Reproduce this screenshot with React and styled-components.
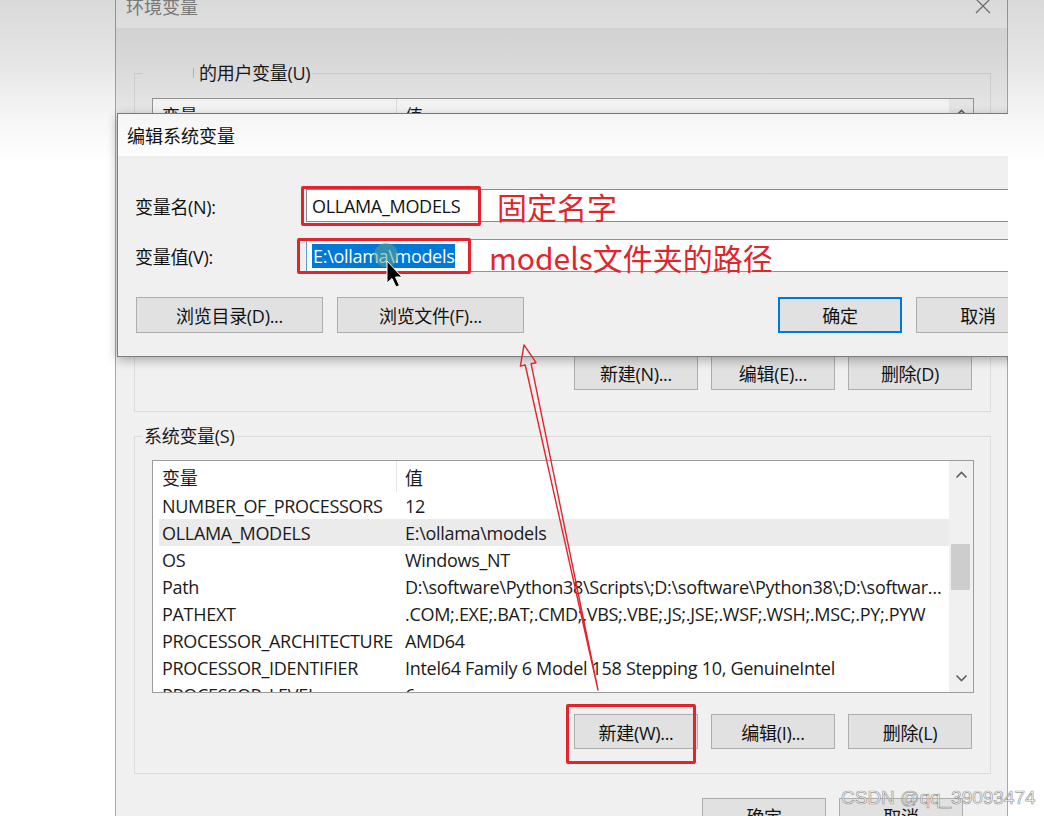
import React from 'react';
import styled, { createGlobalStyle } from 'styled-components';

const UI = `"Open Sans", "Noto Sans CJK SC", sans-serif`;

const GlobalStyle = createGlobalStyle`
  html, body { margin: 0; padding: 0; background: #ffffff; }
  body { font-family: ${UI}; color: #000; }
  * { box-sizing: border-box; }
`;

const Page = styled.div`
  position: relative;
  width: 1044px;
  height: 816px;
  overflow: hidden;
  display: flex;
  background: #ffffff;
`;

const Screen = styled.div`
  position: relative;
  flex: 0 0 1008px;
  height: 816px;
  overflow: hidden;
`;

/* ---------- background window ---------- */
const BackWindow = styled.div`
  position: absolute;
  left: 115px;
  top: -16px;
  width: 893px;
  height: 900px;
  background: #f0f0f0;
  border-left: 1px solid #a9a9a9;
  border-right: 1px solid #a9a9a9;
  display: flex;
  flex-direction: column;
`;

const TitleBar = styled.div`
  height: 44px;
  flex: 0 0 44px;
  background: #ffffff;
  display: flex;
  align-items: center;
  justify-content: space-between;
  padding: 0 16px 0 10px;
  font-size: 18px;
  color: #8c8c8c;
`;

const WindowBody = styled.div`
  padding: 32px 16px 0 18px;
  display: flex;
  flex-direction: column;
`;

const Group = styled.fieldset`
  margin: ${(p) => p.$top || 0}px 0 0 0;
  padding: 0 16px ${(p) => p.$bottom}px 17px;
  border: 1px solid #dcdcdc;
  min-width: 0;
  display: flex;
  flex-direction: column;
`;

const Legend = styled.legend`
  margin-left: -10px;
  padding: 0 2px;
  font-size: 18px;
  line-height: 26px;
  letter-spacing: -0.3px;
  color: #1a1a1a;
  display: flex;
  align-items: center;
`;

const Erased = styled.span`
  display: inline-block;
  width: 50px;
  height: 10px;
  border-right: 1px solid #b7c6d6;
  margin-right: 5px;
`;

const ListBox = styled.div`
  margin-top: ${(p) => p.$top}px;
  height: ${(p) => p.$h}px;
  border: 1px solid #9c9c9c;
  background: #ffffff;
  display: flex;
  overflow: hidden;
`;

const ListContent = styled.div`
  flex: 1;
  min-width: 0;
  padding-left: 6px;
  display: flex;
  flex-direction: column;
  overflow: hidden;
`;

const Row = styled.div`
  display: grid;
  grid-template-columns: 238px 1fr;
  flex: 0 0 ${(p) => (p.$header ? 31 : 27)}px;
  height: ${(p) => (p.$header ? 31 : 27)}px;
  align-items: center;
  font-size: 18px;
  letter-spacing: -0.3px;
  color: #1a1a1a;
  background: ${(p) => (p.$selected ? '#ebebeb' : 'transparent')};
  white-space: nowrap;
`;

const NameCell = styled.div`
  padding-left: 3px;
  height: 100%;
  display: flex;
  align-items: center;
  overflow: hidden;
  border-right: ${(p) => (p.$header ? '1px solid #e5e5e5' : 'none')};
`;

const ValueCell = styled.div`
  padding-left: 8px;
  padding-right: 6px;
  overflow: hidden;
  text-overflow: ellipsis;
`;

const ScrollBar = styled.div`
  flex: 0 0 24px;
  background: #f0f0f0;
  position: relative;
  display: flex;
  flex-direction: column;
  justify-content: space-between;
  align-items: center;
  padding: 10px 0;
`;

const Thumb = styled.div`
  position: absolute;
  left: 2px;
  right: 3px;
  top: ${(p) => p.$top}px;
  height: ${(p) => p.$h}px;
  background: #cdcdcd;
`;

const Chevron = ({ down }) => (
  <svg width="13" height="8" viewBox="0 0 13 8">
    <path
      d={down ? 'M1.5 1.5 L6.5 6.5 L11.5 1.5' : 'M1.5 6.5 L6.5 1.5 L11.5 6.5'}
      fill="none"
      stroke="#606060"
      strokeWidth="1.6"
    />
  </svg>
);

const ButtonRow = styled.div`
  margin-top: ${(p) => p.$top}px;
  display: flex;
  justify-content: flex-end;
  gap: 13px;
  padding-right: ${(p) => p.$right || 2}px;
`;

const Button = styled.div`
  width: ${(p) => p.$w || 124}px;
  height: ${(p) => p.$h || 35}px;
  flex: 0 0 auto;
  background: #e1e1e1;
  border: ${(p) => (p.$default ? '2px solid #0078d7' : '1px solid #adadad')};
  display: flex;
  align-items: center;
  justify-content: center;
  font-size: 18px;
  letter-spacing: -0.3px;
  color: #111;
`;

/* ---------- edit dialog ---------- */
const Dialog = styled.div`
  position: absolute;
  left: 117px;
  top: 113px;
  width: 942px;
  height: 244px;
  border: 1px solid #7d7d7d;
  background: #f0f0f0;
  box-shadow: 0 3px 10px rgba(0, 0, 0, 0.3);
  display: flex;
  flex-direction: column;
`;

const DialogTitle = styled.div`
  flex: 0 0 42px;
  background: #ffffff;
  display: flex;
  align-items: center;
  padding-left: 9px;
  font-size: 18px;
  color: #111;
`;

const DialogBody = styled.div`
  padding: 33px 18px 0 17px;
  display: flex;
  flex-direction: column;
`;

const FieldGrid = styled.div`
  display: grid;
  grid-template-columns: 171px 1fr;
  row-gap: 17px;
  align-items: center;
`;

const Label = styled.div`
  font-size: 18px;
  letter-spacing: -0.3px;
  color: #111;
`;

const TextField = styled.div`
  height: 33px;
  background: #ffffff;
  border: 1px solid ${(p) => (p.$focused ? '#5a9fdc' : '#8a8a8a')};
  display: flex;
  align-items: center;
  padding-left: 5px;
  font-size: 18px;
  letter-spacing: -0.3px;
  color: #111;
  white-space: nowrap;
`;

const Selected = styled.span`
  background: #0078d7;
  color: #ffffff;
  line-height: 24px;
  padding: 0 1px;
`;

const DialogButtons = styled.div`
  margin-top: 25px;
  padding-left: 1px;
  display: flex;
  gap: 14px;
`;

const Spacer = styled.div`
  flex: 1;
`;

/* ---------- annotations ---------- */
const RedBox = styled.div`
  position: absolute;
  left: ${(p) => p.$x}px;
  top: ${(p) => p.$y}px;
  width: ${(p) => p.$w}px;
  height: ${(p) => p.$h}px;
  border: 3px solid #e3242b;
  border-radius: 2px;
`;

const RedText = styled.div`
  position: absolute;
  left: ${(p) => p.$x}px;
  top: ${(p) => p.$y}px;
  font-family: "Noto Sans CJK SC", sans-serif;
  font-size: 30px;
  line-height: 36px;
  color: #e3242b;
  white-space: nowrap;
`;

const Overlay = styled.svg`
  position: absolute;
  left: 0;
  top: 0;
  pointer-events: none;
`;

const Shade = styled.div`
  position: absolute;
  inset: 0;
  pointer-events: none;
  background: linear-gradient(
    to bottom,
    rgba(0, 0, 0, 0.15) 0px,
    rgba(0, 0, 0, 0.1) 60px,
    rgba(0, 0, 0, 0.04) 115px,
    rgba(0, 0, 0, 0) 165px
  );
`;

const Watermark = styled.div`
  position: absolute;
  left: 841px;
  top: 786px;
  font-family: "Liberation Sans", Arial, sans-serif;
  font-size: 19px;
  line-height: 24px;
  color: rgba(255, 255, 255, 0.75);
  -webkit-text-stroke: 0.7px rgba(120, 120, 120, 0.75);
  white-space: nowrap;
  pointer-events: none;
`;

const systemVars = [
  ['NUMBER_OF_PROCESSORS', '12'],
  ['OLLAMA_MODELS', 'E:\\ollama\\models', true],
  ['OS', 'Windows_NT'],
  ['Path', 'D:\\software\\Python38\\Scripts\\;D:\\software\\Python38\\;D:\\software\\Git\\cmd;C:\\Windows'],
  ['PATHEXT', '.COM;.EXE;.BAT;.CMD;.VBS;.VBE;.JS;.JSE;.WSF;.WSH;.MSC;.PY;.PYW'],
  ['PROCESSOR_ARCHITECTURE', 'AMD64'],
  ['PROCESSOR_IDENTIFIER', 'Intel64 Family 6 Model 158 Stepping 10, GenuineIntel'],
  ['PROCESSOR_LEVEL', '6'],
];

function VarList({ top, height, rows, thumb }) {
  return (
    <ListBox $top={top} $h={height}>
      <ListContent>
        <Row $header>
          <NameCell $header>变量</NameCell>
          <ValueCell>值</ValueCell>
        </Row>
        {rows.map(([n, v, sel]) => (
          <Row key={n} $selected={sel}>
            <NameCell>{n}</NameCell>
            <ValueCell>{v}</ValueCell>
          </Row>
        ))}
      </ListContent>
      <ScrollBar>
        <Chevron />
        {thumb && <Thumb $top={thumb[0]} $h={thumb[1]} />}
        <Chevron down />
      </ScrollBar>
    </ListBox>
  );
}

export default function App() {
  return (
    <>
      <GlobalStyle />
      <Page>
        <Screen>
          <BackWindow>
            <TitleBar>
              <span>环境变量</span>
              <svg width="16" height="16" viewBox="0 0 16 16">
                <path d="M1 1 L15 15 M15 1 L1 15" stroke="#7a7a7a" strokeWidth="1.2" />
              </svg>
            </TitleBar>
            <WindowBody>
              <Group $bottom={21}>
                <Legend>
                  <Erased />
                  的用户变量(U)
                </Legend>
                <VarList top={12} height={235} rows={[]} />
                <ButtonRow $top={22}>
                  <Button>新建(N)...</Button>
                  <Button>编辑(E)...</Button>
                  <Button>删除(D)</Button>
                </ButtonRow>
              </Group>
              <Group $top={11} $bottom={24}>
                <Legend>系统变量(S)</Legend>
                <VarList top={11} height={233} rows={systemVars} thumb={[83, 46]} />
                <ButtonRow $top={21}>
                  <Button>新建(W)...</Button>
                  <Button>编辑(I)...</Button>
                  <Button>删除(L)</Button>
                </ButtonRow>
              </Group>
              <ButtonRow $top={24} $right={28}>
                <Button>确定</Button>
                <Button>取消</Button>
              </ButtonRow>
            </WindowBody>
          </BackWindow>

          <Dialog>
            <DialogTitle>编辑系统变量</DialogTitle>
            <DialogBody>
              <FieldGrid>
                <Label>变量名(N):</Label>
                <TextField>OLLAMA_MODELS</TextField>
                <Label>变量值(V):</Label>
                <TextField $focused>
                  <Selected>E:\ollama\models</Selected>
                </TextField>
              </FieldGrid>
              <DialogButtons>
                <Button $w={187} $h={36}>浏览目录(D)...</Button>
                <Button $w={187} $h={36}>浏览文件(F)...</Button>
                <Spacer />
                <Button $w={124} $h={36} $default>确定</Button>
                <Button $w={124} $h={36}>取消</Button>
              </DialogButtons>
            </DialogBody>
          </Dialog>

          <RedBox $x={301} $y={186} $w={180} $h={40} />
          <RedBox $x={297} $y={238} $w={174} $h={36} />
          <RedBox $x={566} $y={704} $w={130} $h={60} />
          <RedText $x={497} $y={188}>固定名字</RedText>
          <RedText $x={489} $y={239}>models文件夹的路径</RedText>

          <Overlay width="1008" height="816" viewBox="0 0 1008 816">
            <g transform="translate(598 690) rotate(-12.1)">
              <path
                d="M0 0 L-3 -333 L-8 -333 L0 -353 L8 -333 L3 -333 Z"
                fill="none"
                stroke="#e3242b"
                strokeWidth="1.4"
                strokeLinejoin="round"
              />
            </g>
            <circle cx="386" cy="255" r="12" fill="rgba(95,160,140,0.55)" />
            <g transform="translate(387 261)">
              <path
                d="M0 0 L0 22 L5 17.5 L9 26 L12.5 24.5 L8.5 16 L15 16 Z"
                fill="#000"
                stroke="#fff"
                strokeWidth="1"
              />
            </g>
          </Overlay>
        </Screen>
        <Watermark>CSDN @qq_39093474</Watermark>
        <Shade />
      </Page>
    </>
  );
}
